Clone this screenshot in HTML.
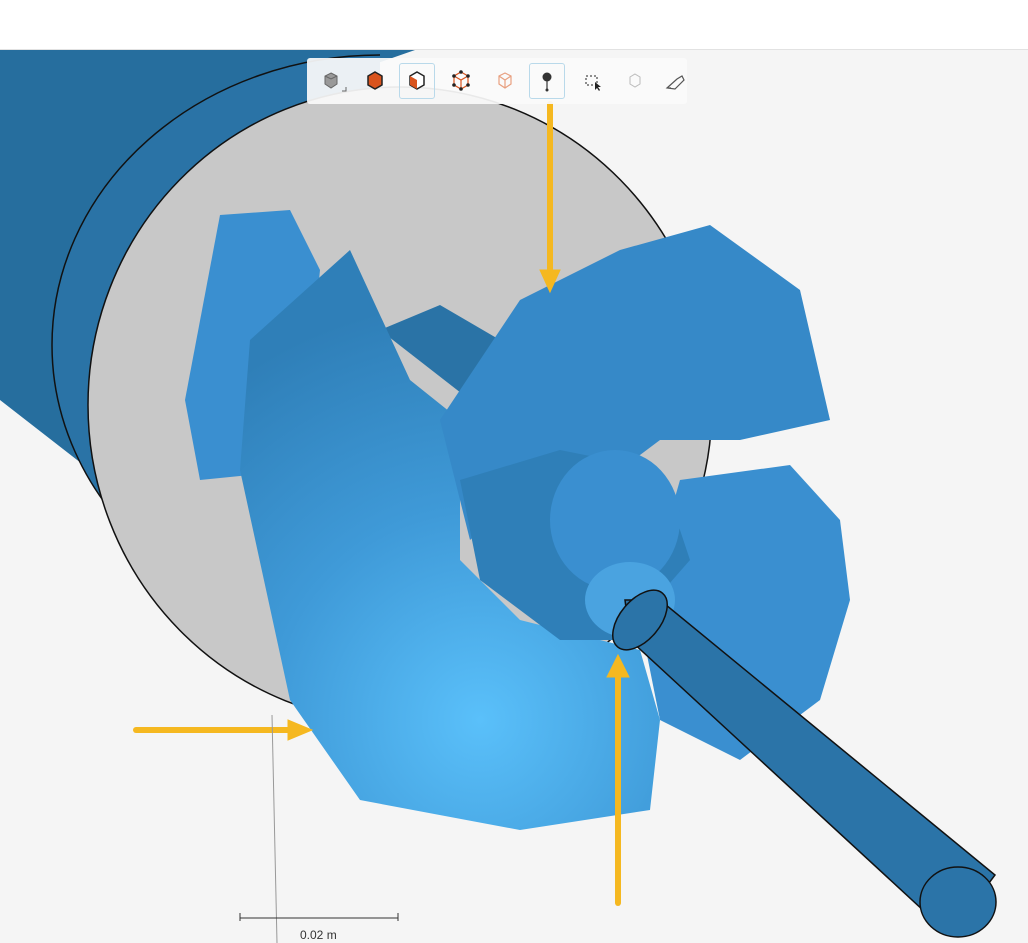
<!DOCTYPE html>
<html><head><style>
body{margin:0;width:1028px;height:943px;overflow:hidden;background:#f5f5f5;font-family:"Liberation Sans",sans-serif}
#top{position:absolute;left:0;top:0;width:1028px;height:49px;background:#fff;border-bottom:1px solid #e2e2e2}
#tb{position:absolute;left:307px;top:58px;width:380px;height:46px;background:rgba(250,250,250,.93);border-radius:3px}
.b{position:absolute;top:5px;width:36px;height:36px;box-sizing:border-box}
.sel{border:1px solid #b9d9ea;border-radius:3px}
</style></head><body>
<div id="top"></div>
<svg width="1028" height="943" style="position:absolute;left:0;top:0">
<defs>
<radialGradient id="g" cx="480" cy="720" r="420" gradientUnits="userSpaceOnUse"><stop offset="0" stop-color="#5ac0fa"/><stop offset=".5" stop-color="#3f9ad8"/><stop offset="1" stop-color="#2f7fb8"/></radialGradient>
<clipPath id="lc"><rect x="0" y="50" width="380" height="550"/></clipPath>
</defs>
<path d="M0 50 L415 50 L300 90 L150 200 L90 470 L0 400 Z" fill="#266e9e"/>
<g clip-path="url(#lc)"><ellipse cx="380" cy="345" rx="328" ry="290" fill="#2a73a6" stroke="#111" stroke-width="1.5"/></g>
<ellipse cx="400" cy="405" rx="312" ry="318" fill="#c8c8c8" stroke="#111" stroke-width="1.5"/>
<path d="M220 215 L290 210 L320 270 L300 470 L200 480 L185 400 Z" fill="#3a8fd0"/>
<path d="M380 330 L440 305 L500 340 L470 400 Z" fill="#2a73a6"/>
<path d="M240 470 L250 340 L350 250 L410 380 L460 420 L460 560 L520 620 L640 650 L660 720 L650 810 L520 830 L360 800 L290 700 Z" fill="url(#g)"/>
<path d="M440 420 L520 300 L620 250 L710 225 L800 290 L830 420 L740 440 L660 440 L620 470 L560 460 L470 540 Z" fill="#3689c8"/>
<path d="M680 480 L790 465 L840 520 L850 600 L820 700 L740 760 L660 720 L640 620 Z" fill="#3a8fd0"/>
<path d="M460 480 L560 450 L660 470 L690 560 L620 640 L560 640 L480 580 Z" fill="#2f7fb8"/>
<ellipse cx="615" cy="520" rx="65" ry="70" fill="#3a8fd0"/>
<ellipse cx="630" cy="600" rx="45" ry="38" fill="#4aa3e0"/>
<path d="M625 600 L660 600 L995 875 L950 935 L630 640 Z" fill="#2b74a8" stroke="#111" stroke-width="1.5"/>
<ellipse cx="640" cy="620" rx="35" ry="20" fill="#2b74a8" stroke="#111" stroke-width="1.5" transform="rotate(-50 640 620)"/>
<ellipse cx="958" cy="902" rx="38" ry="35" fill="#2b74a8" stroke="#111" stroke-width="1.5"/>
<g stroke="#f5b820" stroke-width="6" stroke-linecap="round" fill="#f5b820">
<line x1="550" y1="104" x2="550" y2="272"/><path d="M540 270 L560 270 L550 292 Z" stroke-width="1"/>
<line x1="136" y1="730" x2="290" y2="730"/><path d="M288 720 L288 740 L312 730 Z" stroke-width="1"/>
<line x1="618" y1="903" x2="618" y2="675"/><path d="M607 677 L629 677 L618 655 Z" stroke-width="1"/>
</g>
<line x1="272" y1="715" x2="277" y2="943" stroke="#999" stroke-width="1"/>
<line x1="240" y1="918" x2="398" y2="918" stroke="#333"/>
<line x1="240" y1="913" x2="240" y2="921" stroke="#333"/><line x1="398" y1="913" x2="398" y2="921" stroke="#333"/>
<text x="300" y="939" font-size="12" fill="#333" font-family="Liberation Sans">0.02 m</text>
</svg>
<div id="tb">
<div class="b" style="left:6px"><svg width="36" height="36"><path d="M18 10 L24 13 L24 21 L18 25 L12 21 L12 13 Z" fill="#999" stroke="#666"/><path d="M12 13 L18 16 L24 13" fill="none" stroke="#666"/><path d="M29 28 L33 28 L33 24" fill="none" stroke="#666"/></svg></div>
<div class="b" style="left:50px"><svg width="36" height="36"><path d="M18 9 L25 13 L25 22 L18 26 L11 22 L11 13 Z" fill="#d9541e" stroke="#222" stroke-width="1.5"/></svg></div>
<div class="b sel" style="left:92px"><svg width="34" height="34"><path d="M17 8 L24 12 L24 21 L17 25 L10 21 L10 12 Z" fill="#fff" stroke="#222" stroke-width="1.5"/><path d="M10 12 L17 16 L17 25 L10 21Z" fill="#d9541e"/></svg></div>
<div class="b" style="left:136px"><svg width="36" height="36"><path d="M18 9 L25 13 L25 22 L18 26 L11 22 L11 13 Z M11 13 L18 17 L25 13 M18 17 L18 26" fill="none" stroke="#d9541e" stroke-width="1.2"/><g fill="#222"><circle cx="18" cy="9" r="1.8"/><circle cx="25" cy="13" r="1.8"/><circle cx="25" cy="22" r="1.8"/><circle cx="18" cy="26" r="1.8"/><circle cx="11" cy="22" r="1.8"/><circle cx="11" cy="13" r="1.8"/></g></svg></div>
<div class="b" style="left:180px"><svg width="36" height="36"><path d="M18 10 L24 13 L24 21 L18 25 L12 21 L12 13 Z M12 13 L18 17 L24 13 M18 17 L18 25" fill="none" stroke="#e8a080" stroke-width="1.2"/></svg></div>
<div class="b sel" style="left:222px"><svg width="34" height="34"><circle cx="17" cy="13" r="4.5" fill="#333"/><line x1="17" y1="15" x2="17" y2="26" stroke="#333" stroke-width="1.2"/><circle cx="17" cy="26" r="1.5" fill="#333"/></svg></div>
<div class="b" style="left:268px"><svg width="36" height="36"><rect x="11" y="13" width="11" height="9" fill="none" stroke="#222" stroke-dasharray="2 2"/><path d="M20 19 L20 27 L22 25 L24 28 L25 27 L23 24 L26 24Z" fill="#222"/></svg></div>
<div class="b" style="left:310px"><svg width="36" height="36"><path d="M18 11 L23 14 L23 21 L18 24 L13 21 L13 14Z" fill="none" stroke="#bbb"/></svg></div>
<div class="b" style="left:350px"><svg width="36" height="36"><path d="M10 25 L20 16 L25 13 L27 17 L18 26 Z M10 25 L14 25" fill="none" stroke="#555" stroke-width="1.2"/></svg></div>
</div>
</body></html>
